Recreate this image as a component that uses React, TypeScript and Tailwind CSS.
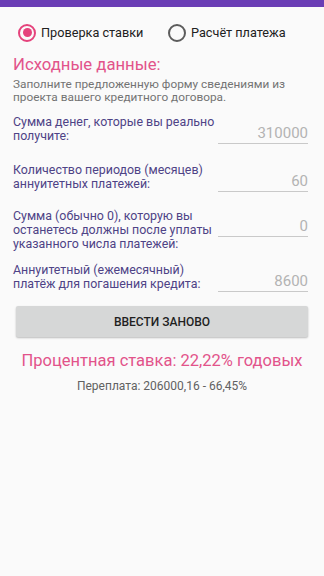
import React from "react";

const PINK = "#e2538a";

function Radio({ checked, label }: { checked: boolean; label: string }) {
  return (
    <div className="flex items-center gap-[5px]">
      <span
        className={
          checked
            ? "flex h-[18px] w-[18px] items-center justify-center rounded-full border-[2px] border-[#e5437c]"
            : "flex h-[18px] w-[18px] items-center justify-center rounded-full border-[2px] border-[#5c5c5c]"
        }
      >
        {checked && <span className="h-[9px] w-[9px] rounded-full bg-[#e5437c]" />}
      </span>
      <span className="text-[12.7px] text-[#212121]">{label}</span>
    </div>
  );
}

type Field = { lines: string[]; value: string; rowClass: string; labelClass?: string; inputClass?: string };

const fields: Field[] = [
  { lines: ["Сумма денег, которые вы реально", "получите:"], value: "310000", rowClass: "h-[48px]" },
  { lines: ["Количество периодов (месяцев)", "аннуитетных платежей:"], value: "60", rowClass: "h-[48px]" },
  {
    lines: ["Сумма (обычно 0), которую вы", "останетесь должны после уплаты", "указанного числа платежей:"],
    value: "0",
    rowClass: "h-[52px]",
    labelClass: "mt-[6px]",
    inputClass: "mb-[10px]",
  },
  { lines: ["Аннуитетный (ежемесячный)", "платёж для погашения кредита:"], value: "8600", rowClass: "h-[48px]" },
];

function FieldRow({ f }: { f: Field }) {
  return (
    <div className={`flex items-center justify-between ${f.rowClass}`}>
      <div className={`whitespace-nowrap text-[12.4px] leading-[14px] text-[#4e4386] ${f.labelClass ?? ""}`}>
        {f.lines.map((l) => (
          <div key={l}>{l}</div>
        ))}
      </div>
      <div
        className={`h-[30px] w-[90px] border-b border-[#c9c9c9] pt-[10px] text-right text-[15px] leading-[18px] text-[#b3b3b3] ${f.inputClass ?? ""}`}
      >
        {f.value}
      </div>
    </div>
  );
}

export default function App() {
  return (
    <div
      className="h-[576px] w-[324px] overflow-hidden bg-[#fafafa]"
      style={{ fontFamily: "Roboto, 'Noto Sans', sans-serif" }}
    >
      <div className="h-[7px] bg-[#6a3db5]" />

      <div className="mt-[5px] flex h-[42px] items-center pl-[18px]">
        <div className="w-[150px]">
          <Radio checked label="Проверка ставки" />
        </div>
        <Radio checked={false} label="Расчёт платежа" />
      </div>

      <div className="pl-[13px] pr-[16px]">
        <h1 className="mt-[1px] text-[16.7px] leading-[20px]" style={{ color: PINK }}>
          Исходные данные:
        </h1>
        <p className="mt-[3px] text-[11.8px] leading-[12.5px] text-[#737373]">
          Заполните предложенную форму сведениями из
          <br />
          проекта вашего кредитного договора.
        </p>

        <div className="mt-[2px]">
          {fields.map((f) => (
            <FieldRow key={f.value} f={f} />
          ))}
        </div>
      </div>

      <div className="px-[16px]">
        <button className="mt-[5px] flex h-[31px] w-full items-center justify-center rounded-[2px] bg-[#d6d7d7] text-[12px] font-medium text-[#1f1f1f] shadow-[0_1px_2px_rgba(0,0,0,0.25)]">
          ВВЕСТИ ЗАНОВО
        </button>
      </div>

      <div className="mt-[13px] text-center text-[16.5px] leading-[22px]" style={{ color: PINK }}>
        Процентная ставка: 22,22% годовых
      </div>
      <div className="mt-[7px] text-center text-[12px] leading-[14px] text-[#616161]">
        Переплата: 206000,16 - 66,45%
      </div>
    </div>
  );
}
